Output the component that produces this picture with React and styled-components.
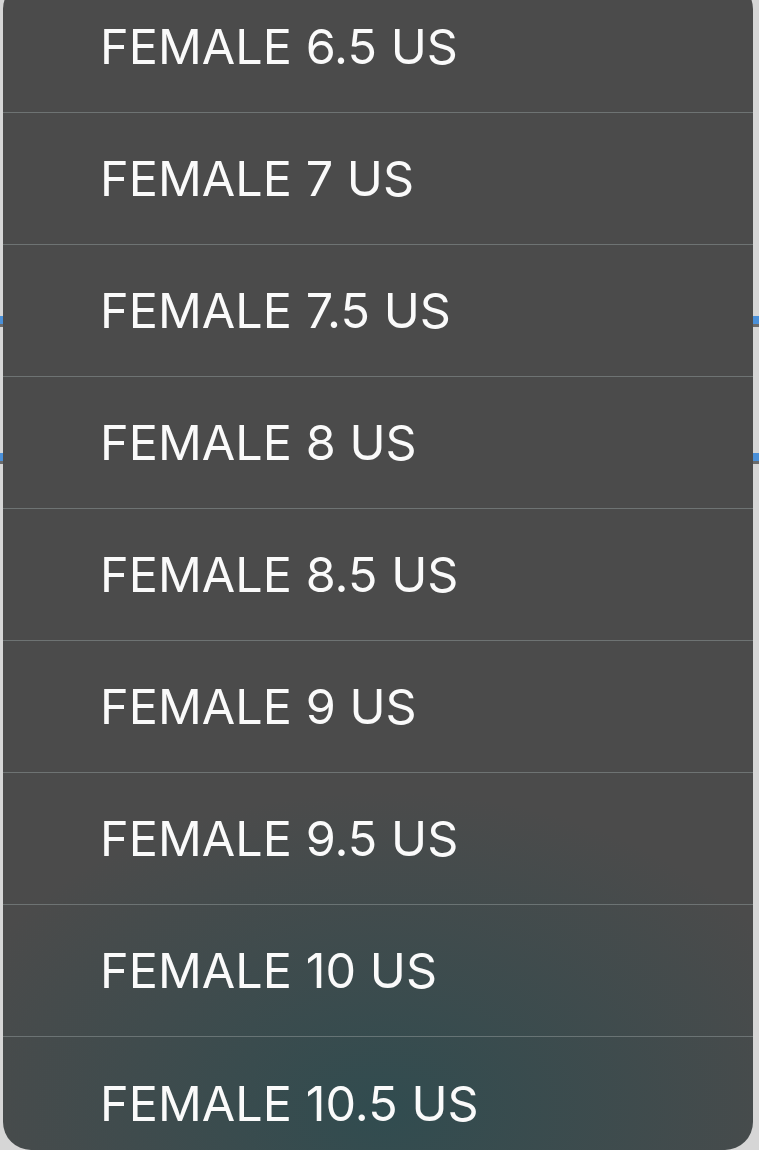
import styled, { createGlobalStyle } from 'styled-components';

const sizes = ['6.5', '7', '7.5', '8', '8.5', '9', '9.5', '10', '10.5'];

const GlobalStyle = createGlobalStyle`
  html, body {
    margin: 0;
    padding: 0;
    background: #d6d6d6;
  }
  body {
    font-family: Inter, "Noto Sans", sans-serif;
  }
`;

const Page = styled.div`
  position: relative;
  width: 759px;
  height: 1150px;
  overflow: hidden;
  background: #d6d6d6;
  display: flex;
  flex-direction: column;
  padding-top: 316px;
  box-sizing: border-box;
  gap: 126px;
`;

const Field = styled.div`
  height: 11px;
  background: #4a90d9;
  border-bottom: 3px solid #6b6b6b;
  box-sizing: border-box;
`;

const Menu = styled.ul`
  position: absolute;
  top: -19px;
  left: 3px;
  right: 6px;
  bottom: 0;
  margin: 0;
  padding: 0;
  list-style: none;
  border-radius: 28px;
  overflow: hidden;
  background:
    radial-gradient(ellipse 460px 320px at 380px 1130px, rgba(46, 76, 80, 0.9), rgba(46, 76, 80, 0) 100%),
    #4b4b4b;
`;

const Item = styled.li`
  height: 132px;
  display: flex;
  align-items: center;
  padding-left: 97px;
  box-sizing: border-box;
  color: #fafafa;
  font-size: 48.5px;
  letter-spacing: 0.05px;
  border-bottom: 1px solid rgba(140, 150, 150, 0.55);

  &:last-child {
    border-bottom: none;
  }
`;

export default function App() {
  return (
    <>
      <GlobalStyle />
      <Page>
        <Field />
        <Field />
        <Menu>
          {sizes.map(s => (
            <Item key={s}>FEMALE {s} US</Item>
          ))}
        </Menu>
      </Page>
    </>
  );
}
